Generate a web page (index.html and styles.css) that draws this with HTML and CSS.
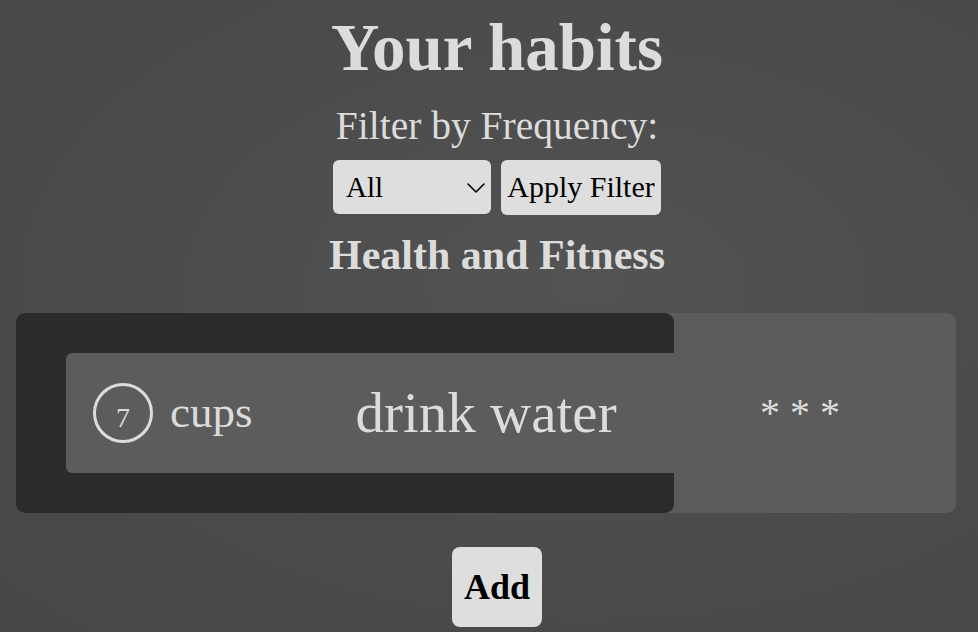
FILE: index.html
```html
<!DOCTYPE html>
<html lang="en">
<head>
<meta charset="utf-8">
<title>Your habits</title>
<link rel="stylesheet" href="styles.css">
</head>
<body>
<main class="page">
  <h1 class="title">Your habits</h1>
  <form class="filter">
    <label class="filter-label" for="freq">Filter by Frequency:</label>
    <div class="filter-controls">
      <div class="select-wrap">
        <select id="freq" class="select">
          <option>All</option>
          <option>Daily</option>
          <option>Weekly</option>
        </select>
        <svg class="chevron" width="18" height="10" viewBox="0 0 18 10" aria-hidden="true"><path d="M1 1 L9 9 L17 1" fill="none" stroke="#000" stroke-width="1.6" stroke-linecap="round" stroke-linejoin="round"/></svg>
      </div>
      <button type="button" class="btn">Apply Filter</button>
    </div>
  </form>
  <h2 class="category">Health and Fitness</h2>
  <section class="card">
    <div class="card-main">
      <div class="habit-row">
        <div class="counter">
          <span class="count">7</span>
          <span class="unit">cups</span>
        </div>
        <span class="habit-name">drink water</span>
      </div>
    </div>
    <div class="card-side">* * *</div>
  </section>
  <div class="add-wrap">
    <button type="button" class="btn-add">Add</button>
  </div>
</main>
</body>
</html>
```
FILE: styles.css
```css
html, body {
  margin: 0;
  padding: 0;
  height: 100%;
}
body {
  background: radial-gradient(ellipse at 60% 45%, #535353 0%, #4b4b4b 55%, #474747 100%);
  color: #dcdcdc;
  font-family: "Liberation Serif", "Times New Roman", serif;
  overflow: hidden;
}
.page {
  display: flex;
  flex-direction: column;
  align-items: center;
  padding-left: 16px;
}
.title {
  margin: 14px 0 0;
  font-size: 67px;
  line-height: 1;
  font-weight: 700;
}
.filter {
  display: flex;
  flex-direction: column;
  align-items: center;
  margin-top: 26px;
}
.filter-label {
  font-size: 39.5px;
  line-height: 1;
}
.filter-controls {
  display: flex;
  gap: 10px;
  margin-top: 13px;
}
.select-wrap {
  position: relative;
  width: 158px;
  height: 54px;
}
.select {
  appearance: none;
  -webkit-appearance: none;
  width: 100%;
  height: 100%;
  border: none;
  border-radius: 6px;
  background-color: #dedede;
  color: #000;
  font-family: inherit;
  font-size: 29px;
  padding: 0 30px 0 13px;
}
.chevron {
  position: absolute;
  right: 6px;
  top: 23px;
  pointer-events: none;
}
.btn {
  height: 55px;
  width: 160px;
  border: none;
  border-radius: 6px;
  background: #dedede;
  color: #000;
  font-family: inherit;
  font-size: 30px;
  padding: 0;
}
.category {
  margin: 19px 0 0;
  font-size: 42px;
  line-height: 1;
  font-weight: 700;
}
.card {
  align-self: flex-start;
  margin-top: 37px;
  width: 940px;
  height: 200px;
  display: flex;
  background: #5c5c5c;
  border-radius: 9px;
}
.card-main {
  width: 658px;
  background: #2b2b2b;
  border-radius: 9px;
  padding: 40px 0 40px 50px;
  box-sizing: border-box;
}
.habit-row {
  height: 120px;
  background: #5c5c5c;
  border-radius: 6px 0 0 6px;
  display: flex;
  align-items: center;
  padding-left: 27px;
}
.counter {
  display: flex;
  align-items: center;
  gap: 17px;
}
.count {
  width: 54px;
  height: 44px;
  padding-top: 10px;
  border: 3px solid #dcdcdc;
  border-radius: 50%;
  display: flex;
  align-items: center;
  justify-content: center;
  font-size: 28px;
  line-height: 1;
}
.unit {
  font-size: 45px;
  line-height: 1;
}
.habit-name {
  margin-left: 103px;
  font-size: 57px;
  line-height: 1;
}
.card-side {
  flex: 1;
  display: flex;
  align-items: center;
  justify-content: center;
  padding-right: 30px;
  font-size: 40px;
  line-height: 1;
}
.add-wrap {
  margin-top: 34px;
}
.btn-add {
  width: 90px;
  height: 80px;
  border: none;
  border-radius: 8px;
  background: #dedede;
  color: #000;
  font-family: inherit;
  font-size: 36px;
  font-weight: 700;
  padding: 0;
}
```
